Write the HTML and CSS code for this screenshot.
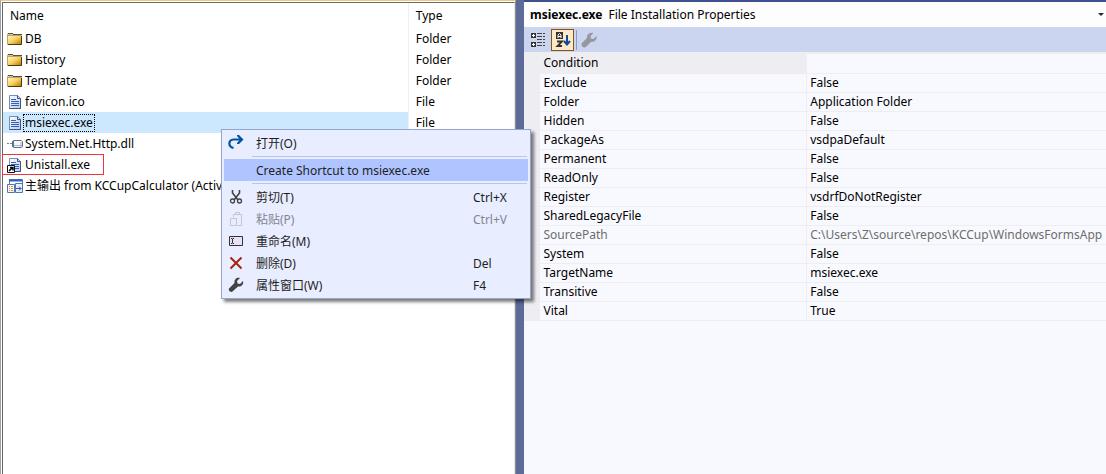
FILE: index.html
```
<!DOCTYPE html>
<html lang="zh-CN">
<head>
<meta charset="utf-8">
<title>File System</title>
<link rel="stylesheet" href="styles.css">
</head>
<body>
<svg class="defs" aria-hidden="true">
  <defs>
    <linearGradient id="gold" x1="0" y1="0" x2="1" y2="1"><stop offset="0" stop-color="#fff6c0"/><stop offset=".5" stop-color="#f6d264"/><stop offset="1" stop-color="#c07c00"/></linearGradient>
    <linearGradient id="sheet" x1="0" y1="0" x2="1" y2="1"><stop offset="0" stop-color="#fff"/><stop offset="1" stop-color="#b9c9e8"/></linearGradient>
    <symbol id="folder" viewBox="0 0 16 16">
      <path d="M0 3l1-1h5l1 2h8v10H0z" fill="#d9c58a"/>
      <path d="M1 4.500h13v8.500H1z" fill="url(#gold)"/>
      <path d="M.5 13V3.500M0 4.500h14" fill="none" stroke="#b5a472"/>
      <path d="M14.500 5v8.500H1" fill="none" stroke="#4a3a10"/>
      <path d="M1 2.500h5M6 3.500h9" fill="none" stroke="#5c5138"/>
    </symbol>
    <symbol id="doc" viewBox="0 0 16 16">
      <path d="M2.500 1.500h8l3 3v10h-11z" fill="url(#sheet)" stroke="#7b8dad"/>
      <path d="M10.500 1.500v3h3M13.500 4.500v10h-11" fill="none" stroke="#40547c"/>
      <path d="M4 5.500h5M4 7.500h8M4 9.500h8M4 11.500h8" stroke="#2f5fc0"/>
    </symbol>
  </defs>
</svg>
<main class="workspace">
  <section class="files">
    <div class="files-frame">
      <table class="file-table">
        <colgroup><col class="col-name"><col></colgroup>
        <thead><tr><th>Name</th><th>Type</th></tr></thead>
        <tbody>
          <tr><td><div class="entry"><svg class="icon"><use href="#folder"/></svg><span class="label">DB</span></div></td><td>Folder</td></tr>
          <tr><td><div class="entry"><svg class="icon"><use href="#folder"/></svg><span class="label">History</span></div></td><td>Folder</td></tr>
          <tr><td><div class="entry"><svg class="icon"><use href="#folder"/></svg><span class="label">Template</span></div></td><td>Folder</td></tr>
          <tr><td><div class="entry"><svg class="icon"><use href="#doc"/></svg><span class="label">favicon.ico</span></div></td><td>File</td></tr>
          <tr><td class="selected"><div class="entry"><svg class="icon"><use href="#doc"/></svg><span class="label focused">msiexec.exe</span></div></td><td>File</td></tr>
          <tr><td><div class="entry"><svg class="icon" viewBox="0 0 16 16"><path d="M0 7.500h2M3 7.500h3" stroke="#777f8c"/><path d="M5.500 5v6M6.500 4.500h8l1 1v5l-1 1h-8z" fill="#f4f7fc" stroke="#62708a"/><path d="M7 9.500h8M14 6v5" stroke="#a5b4d0"/></svg><span class="label">System.Net.Http.dll</span></div></td><td></td></tr>
          <tr><td><div class="entry marked"><svg class="icon" viewBox="0 0 16 16"><use href="#doc" width="16" height="16"/><path d="M.5 8.500h7v7h-7z" fill="#fff" stroke="#111"/><path d="M2 14l3-3M3 10.500h3v3" fill="none" stroke="#000" stroke-width="1.500"/></svg><span class="label">Unistall.exe</span></div></td><td></td></tr>
          <tr><td><div class="entry"><svg class="icon" viewBox="0 0 16 16"><path d="M2.500 1.500h13v9h-13z" fill="#fff" stroke="#5878b0"/><path d="M2 2.500h13" stroke="#2f62bd" stroke-width="2"/><path d="M.5 6.500h7v8h-7z" fill="#f4f7ff" stroke="#5575ad"/><path d="M8.500 5.500h7v9h-7z" fill="#e6efff" stroke="#5575ad"/><path d="M2 8.500h1M4 8.500h2M2 10.500h1M4 10.500h2M2 12.500h1M4 12.500h2" stroke="#d29831"/><path d="M9 10.500h5M12 8.500l2 2-2 2" fill="none" stroke="#2459ba"/></svg><span class="label">主输出 from KCCupCalculator (Active)</span></div></td><td></td></tr>
        </tbody>
      </table>
    </div>
  </section>
  <section class="properties">
    <header class="title"><h1><b>msiexec.exe</b><span>File Installation Properties</span></h1>
      <button class="more" aria-label="Object list"><svg viewBox="0 0 6 4"><path d="M0 0h6L3 3z" fill="#1b293e"/></svg></button></header>
    <div class="toolbar">
      <button class="tool" aria-label="Categorized"><svg viewBox="0 0 16 16"><path d="M1 1h5v5H1zM1 10h5v5H1z" fill="#333"/><path d="M2 3.500h3M3.500 2v3M2 12.500h3M3.500 11v3" stroke="#fff"/><path d="M7 1.500h5M7 4.500h5M7 7.500h5M7 10.500h5M7 13.500h5" stroke="#444"/><path d="M13 1.500h2M13 4.500h2M13 7.500h2M13 10.500h2M13 13.500h2" stroke="#444"/></svg></button>
      <button class="tool active" aria-label="Alphabetical"><svg viewBox="0 0 16 16"><path d="M1 0h7v7H1z" fill="#333"/><path d="M3 6V3l1.500-1.500L6 3v3M3 4.500h3" fill="none" stroke="#fff"/><path d="M2 9.500h5L2.500 14H7" fill="none" stroke="#333" stroke-width="1.800"/><path d="M12 3v10M9 9l3 3.500L15 9" fill="none" stroke="#0d4ba0" stroke-width="2"/></svg></button>
      <span class="divider"></span>
      <button class="tool" aria-label="Property pages" disabled><svg viewBox="0 0 16 16"><path d="M15.500 4l-3 3-2.500-.5L9.500 4l3-3C9 0 5.500 2 6 6L.8 11.200C-.5 13.500 2.500 16.500 4.800 15L10 10C13.500 10.500 16.500 7.500 15.500 4z" fill="#97989f"/></svg></button>
    </div>
    <table class="property-table">
      <colgroup><col class="gutter-col"><col class="key-col"><col></colgroup>
      <tbody>
        <tr class="current"><td></td><th>Condition</th><td></td></tr>
        <tr><td></td><th>Exclude</th><td>False</td></tr>
        <tr><td></td><th>Folder</th><td>Application Folder</td></tr>
        <tr><td></td><th>Hidden</th><td>False</td></tr>
        <tr><td></td><th>PackageAs</th><td>vsdpaDefault</td></tr>
        <tr><td></td><th>Permanent</th><td>False</td></tr>
        <tr><td></td><th>ReadOnly</th><td>False</td></tr>
        <tr><td></td><th>Register</th><td>vsdrfDoNotRegister</td></tr>
        <tr><td></td><th>SharedLegacyFile</th><td>False</td></tr>
        <tr class="readonly"><td></td><th>SourcePath</th><td>C:\Users\Z\source\repos\KCCup\WindowsFormsApp</td></tr>
        <tr><td></td><th>System</th><td>False</td></tr>
        <tr><td></td><th>TargetName</th><td>msiexec.exe</td></tr>
        <tr><td></td><th>Transitive</th><td>False</td></tr>
        <tr><td></td><th>Vital</th><td>True</td></tr>
      </tbody>
    </table>
  </section>
</main>
<div class="menu" role="menu">
  <button class="item" role="menuitem"><svg viewBox="0 0 16 16"><path d="M5.500 13C0 11.500 0 5 5.500 4.500H13" fill="none" stroke="#00539c" stroke-width="2.200"/><path d="M9 0h2l4.500 4.500L11 9H9V8l3-3.500L9 1z" fill="#00539c"/></svg><span>打开(O)</span></button>
  <hr>
  <button class="item hover" role="menuitem"><svg viewBox="0 0 16 16"></svg><span>Create Shortcut to msiexec.exe</span></button>
  <hr>
  <button class="item" role="menuitem"><svg viewBox="0 0 16 16"><path d="M4.500 1v3l5.500 7M11.500 1v3L6 11" fill="none" stroke="#424242" stroke-width="1.600"/><circle cx="4.500" cy="12" r="2" fill="none" stroke="#424242" stroke-width="1.300"/><circle cx="11.500" cy="12" r="2" fill="none" stroke="#424242" stroke-width="1.300"/></svg><span>剪切(T)</span><kbd>Ctrl+X</kbd></button>
  <button class="item" role="menuitem" disabled><svg viewBox="0 0 16 16"><path d="M5.500 6V3.500h8v11h-4M7.500 3V1.500h4V3M2.500 7.500h6v7h-6z" fill="none" stroke="#c4c5d0"/></svg><span>粘贴(P)</span><kbd>Ctrl+V</kbd></button>
  <button class="item" role="menuitem"><svg viewBox="0 0 16 16"><path d="M1.500 3.500h13v9h-13z" fill="#e6e2f4" stroke="#333"/><path d="M3 5.500h1l.5.5.5-.5h1M4.500 6v4M3 10.500h1l.5-.5.5.5h1" fill="none" stroke="#333"/></svg><span>重命名(M)</span></button>
  <button class="item" role="menuitem"><svg viewBox="0 0 16 16"><path d="M2.500 2.500l11 11M13.500 2.500l-11 11" stroke="#a1260d" stroke-width="2"/></svg><span>删除(D)</span><kbd>Del</kbd></button>
  <button class="item" role="menuitem"><svg viewBox="0 0 16 16"><path d="M15 4l-3 3-2.500-.5L9 4l3-3C9 0 6 2 6.500 6L1 11.500C0 13 2.500 16 4.500 14.500L10 9.500C13 10 16 7.500 15 4z" fill="#424242"/></svg><span>属性窗口(W)</span><kbd>F4</kbd></button>
</div>
</body>
</html>
```

FILE: styles.css
```
* { box-sizing: border-box; }
body {
  margin: 0;
  background: #5d6b99;
  color: #000;
  font: 12px/16px "Noto Sans", "Noto Sans CJK SC", sans-serif;
  overflow: hidden;
}
button { margin: 0; padding: 0; border: 0; background: none; color: inherit; font: inherit; }
table { width: 100%; border-collapse: collapse; table-layout: fixed; }
th { font-weight: normal; text-align: left; }
.defs { position: absolute; width: 0; height: 0; }

.workspace { display: grid; grid-template-columns: 516fr 582fr; column-gap: 8px; min-height: 100vh; }

.files { display: grid; min-width: 0; padding: 1px 0 0 1px; background: #fff; border-top: 1px solid #f0cb7c; border-left: 1px solid #a0a0a8; border-right: 1px solid #8b8f98; }
.files-frame { border-top: 1px solid #696969; border-left: 1px solid #696969; border-right: 1px solid #e3e3e3; }
.file-table th { height: 25px; padding: 0 7px; }
.file-table td { height: 21px; padding: 0 7px; }
.file-table td:first-child { padding: 0 0 0 4px; }
.file-table th:first-child, .file-table td:first-child { border-right: 1px solid #e8f0fa; }
.col-name { width: 79.3%; }
.file-table .selected { background: linear-gradient(#cce8ff, #cce8ff) padding-box; }
.entry { display: flex; align-items: center; height: 20px; white-space: nowrap; }
.icon { flex: none; width: 16px; height: 16px; }
.label { padding: 0 1px; border: 1px solid transparent; }
.focused { border: 1px dotted #000; }
.marked { width: 102px; height: 21px; margin-left: -5px; padding-left: 4px; border: 1px solid #f0343c; }

.properties { min-width: 0; background: #f8f9ff; border-top: 2px solid #40508d; }
.title { display: flex; align-items: center; justify-content: space-between; height: 25px; padding: 0 2px 0 6px; background: #fdfdfd; }
.title h1 { display: flex; gap: 6px; margin: 0; font-size: 12px; font-weight: normal; }
.more svg { display: block; width: 6px; height: 4px; }
.toolbar { display: flex; align-items: center; gap: 2px; height: 27px; padding: 0 2px; background: #ccd5f0; border-bottom: 2px solid #eeeef2; }
.tool { display: grid; place-items: center; width: 23px; height: 22px; border: 1px solid transparent; }
.tool svg { width: 16px; height: 16px; }
.tool.active { background: #ffe8c4; border-color: #80561c; }
.tool:disabled { width: 20px; }
.divider { width: 1px; height: 20px; background: #8b9bc6; }
.gutter-col { width: 15px; }
.key-col { width: 46%; }
.property-table th, .property-table td { height: 19px; padding: 0 3px; line-height: 16px; border-bottom: 1px solid #eeeef2; border-right: 1px solid #eeeef2; white-space: nowrap; overflow: hidden; }
.property-table th { padding-left: 4px; }
.property-table td:last-child { border-right: 0; }
.property-table td:first-child, .property-table .current th { background: #eeeef2; }
.readonly { color: #6d6d6d; }

.menu { position: absolute; left: 221px; top: 129px; width: 310px; padding: 2px; background: #e8edff; border: 1px solid #94a6ca; box-shadow: 3px 3px 3px rgba(0, 0, 0, .5); color: #1e1e1e; }
.menu hr { height: 1px; margin: 2px 1px 2px 28px; border: 0; background: #bac6e8; }
.item { display: grid; grid-template-columns: 16px 1fr 55px; column-gap: 12px; align-items: center; width: 100%; height: 22px; padding: 0 0 0 4px; text-align: left; white-space: nowrap; }
.item svg { width: 16px; height: 16px; }
.item span, .item kbd { padding-top: 2px; font: inherit; }
.item.hover { background: #b0c4ff; }
.item:disabled { color: #828590; }
```
